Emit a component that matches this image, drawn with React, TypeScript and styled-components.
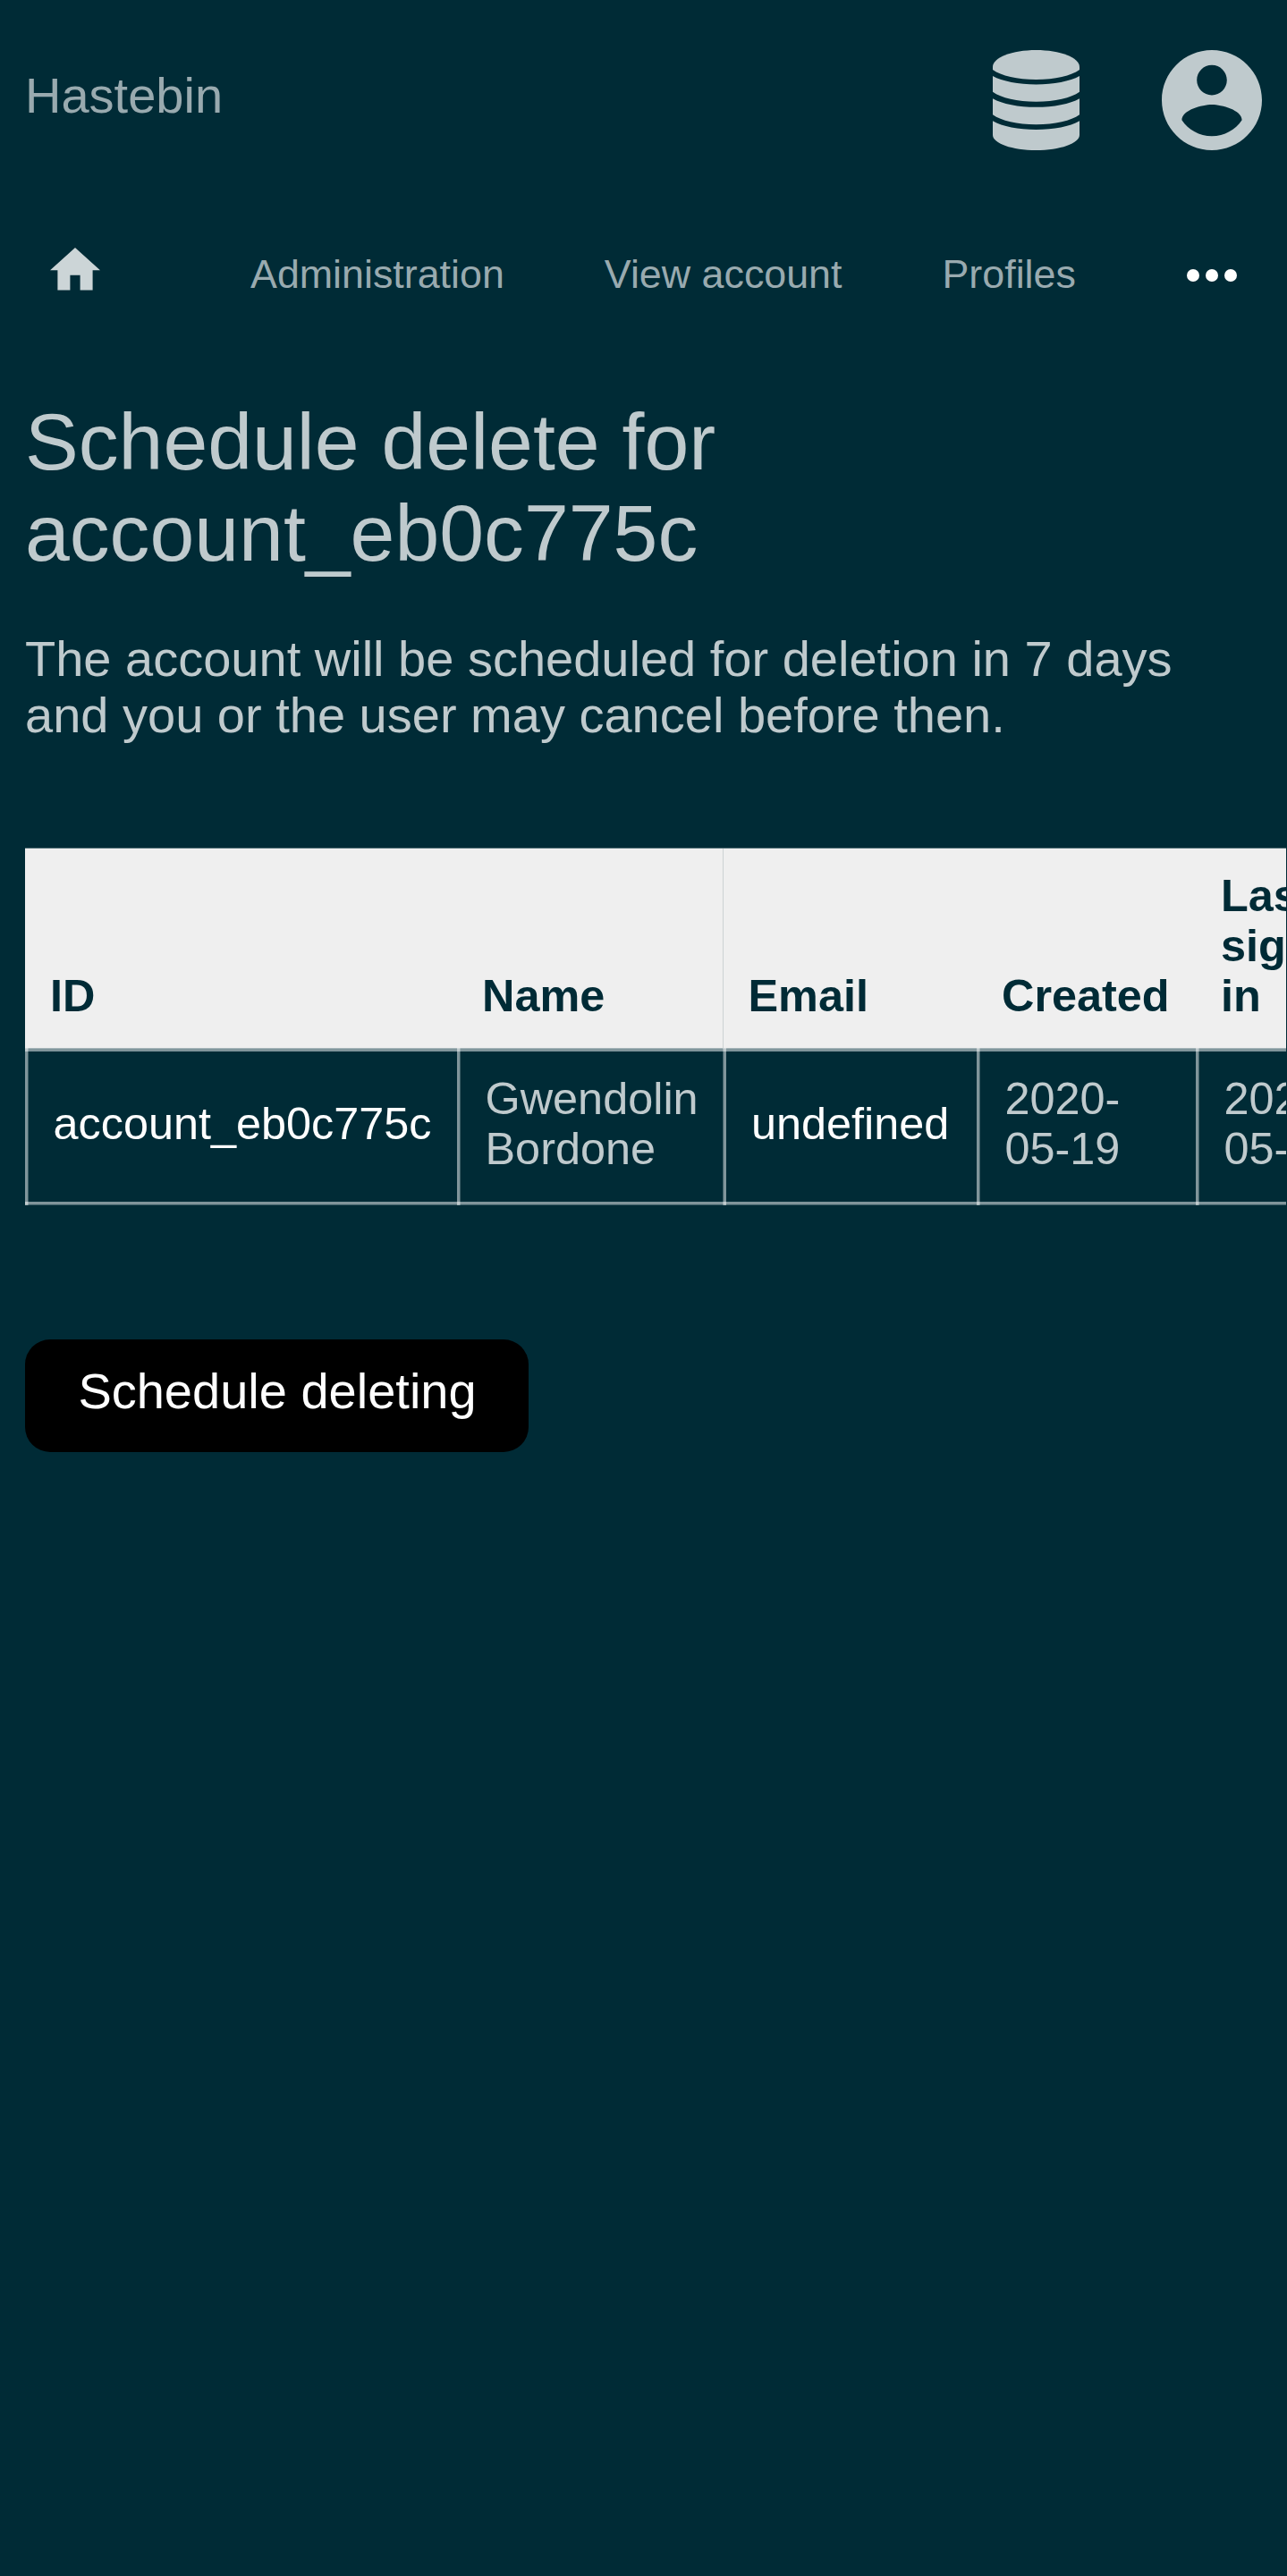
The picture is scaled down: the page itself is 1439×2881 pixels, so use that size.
import React from "react";
import styled, { createGlobalStyle, css } from "styled-components";

const Global = createGlobalStyle`
  html, body { margin: 0; background: #002b36; }
  body {
    font-family: "Liberation Sans", Arial, sans-serif;
    font-size: 56px;
    line-height: 63px;
    color: #bfcacd;
    overflow: hidden;
  }
`;

const Page = styled.div`
  width: 1438px;
  min-height: 2881px;
  overflow: hidden;
  background: #002b36;
`;

const Header = styled.header`
  display: flex;
  align-items: flex-start;
  justify-content: space-between;
  height: 224px;
  padding: 0 27.5px 0 28px;
  box-sizing: border-box;
`;

const Brand = styled.a`
  margin-top: 75px;
  color: #99aaaf;
`;

const Tools = styled.div`
  display: flex;
  gap: 91.5px;
  padding-top: 56px;

  svg { display: block; fill: #bfcacd; }
`;

const Nav = styled.nav`
  display: flex;
  align-items: flex-start;
  height: 219px;
  font-size: 44.8px;
  line-height: 52px;
  color: #99aaaf;
  white-space: nowrap;
`;

const HomeLink = styled.a`
  margin: 53px 0 0 56px;
  width: 224px;

  svg { display: block; fill: #ccd5d7; }
`;

const NavLink = styled.a`
  margin-top: 56px;
  margin-right: 112px;
`;

const More = styled.a`
  margin: 77px 55.5px 0 auto;

  svg { display: block; fill: #fff; }
`;

const Title = styled.h1`
  margin: 0 28px;
  width: 900px;
  font-size: 89.6px;
  font-weight: 400;
  line-height: 102px;
`;

const Intro = styled.p`
  margin: 58px 28px 0;
`;

const TableWrap = styled.div`
  margin: 117px 0 0 28px;
  overflow: hidden;
`;

const Table = styled.div`
  display: grid;
  grid-template-columns: 483px 297px 284px 245px 260px;
  width: max-content;
  font-size: 50.4px;
  line-height: 56px;
  border-top: 1px solid #4d6b72;
`;

const HeadCell = styled.div<{ $divided?: boolean }>`
  display: flex;
  align-items: flex-end;
  height: 223px;
  padding: 0 28px 30px ${(p) => (p.$divided ? "28.5px" : "28px")};
  box-sizing: border-box;
  background: #efefef;
  color: #002b36;
  font-weight: 700;
  ${(p) => p.$divided && css`box-shadow: inset 1px 0 #ccd2d3;`}
`;

const full = "rgba(255,255,255,.5)";
const half = "rgba(255,255,255,.25)";
const seam = "rgba(255,255,255,.65)";

const Cell = styled.div<{ $strong?: boolean; $late?: boolean }>`
  display: flex;
  align-items: center;
  height: 176px;
  padding: 0 28px 7px ${(p) => (p.$late ? "32px" : "31.5px")};
  box-sizing: border-box;
  color: ${(p) => (p.$strong ? "#fff" : "#bfcacd")};
  background:
    linear-gradient(${(p) => (p.$late ? "270deg" : "90deg")}, ${full} 3px, ${half} 3px) 0 0 / 4px 100% no-repeat,
    linear-gradient(${seam} 1px, ${full} 1px) 0 0 / 100% 4px no-repeat,
    linear-gradient(${full} 3px, ${half} 3px) 0 100% / 100% 4px no-repeat;
`;

const Button = styled.button`
  display: block;
  margin: 150px 0 0 28px;
  width: 563px;
  height: 126px;
  padding: 0 0 12px 1px;
  border: 0;
  border-radius: 28px;
  background: #000;
  color: #fff;
  font: inherit;
`;

const DatabaseIcon = () => (
  <svg width="97" height="112" viewBox="0 0 290 335" preserveAspectRatio="none">
    <path d="M0 56C0 25 65 0 145 0S290 25 290 56V66C262 86 208 99 145 99S28 86 0 66Z" />
    <path d="M0 87C32 105 86 115 145 115S258 105 290 87V140C262 160 208 173 145 173S28 160 0 140Z" />
    <path d="M0 162C32 180 86 191 145 191S258 180 290 162V216C262 236 208 249 145 249S28 236 0 216Z" />
    <path d="M0 237C32 256 86 266 145 266S258 256 290 237V284C290 312 225 335 145 335S0 312 0 284Z" />
  </svg>
);

const AccountIcon = () => (
  <svg width="112" height="112" viewBox="2 2 20 20">
    <path d="M12 2C6.48 2 2 6.48 2 12s4.48 10 10 10 10-4.48 10-10S17.52 2 12 2zm0 3c1.66 0 3 1.34 3 3s-1.34 3-3 3-3-1.34-3-3 1.34-3 3-3zm0 14.2c-2.5 0-4.71-1.28-6-3.22.03-1.99 4-3.08 6-3.08 1.99 0 5.97 1.09 6 3.08-1.29 1.94-3.5 3.22-6 3.22z" />
  </svg>
);

const links = ["Administration", "View account", "Profiles"];
const columns = [["ID"], ["Name"], ["Email"], ["Created"], ["Last", "sign", "in"]];
const row = [["account_eb0c775c"], ["Gwendolin", "Bordone"], ["undefined"], ["2020-", "05-19"], ["2020-", "05-19"]];

const Lines = ({ text }: { text: string[] }) => (
  <span>
    {text.map((t, i) => (
      <React.Fragment key={i}>
        {i > 0 && <br />}
        {t}
      </React.Fragment>
    ))}
  </span>
);

export default function App() {
  return (
    <Page>
      <Global />
      <Header>
        <Brand>Hastebin</Brand>
        <Tools>
          <DatabaseIcon />
          <AccountIcon />
        </Tools>
      </Header>
      <Nav>
        <HomeLink>
          <svg width="56" height="47.6" viewBox="2 3 20 17">
            <path d="M10 20v-6h4v6h5v-8h3L12 3 2 12h3v8z" />
          </svg>
        </HomeLink>
        {links.map((l) => (
          <NavLink key={l}>{l}</NavLink>
        ))}
        <More>
          <svg width="56" height="14" viewBox="0 0 16 4">
            <circle cx="2" cy="2" r="2" />
            <circle cx="8" cy="2" r="2" />
            <circle cx="14" cy="2" r="2" />
          </svg>
        </More>
      </Nav>
      <Title>Schedule delete for account_eb0c775c</Title>
      <Intro>The account will be scheduled for deletion in 7 days and you or the user may cancel before then.</Intro>
      <TableWrap>
        <Table>
          {columns.map((c, i) => (
            <HeadCell key={i} $divided={i === 2}>
              <Lines text={c} />
            </HeadCell>
          ))}
          {row.map((c, i) => (
            <Cell key={i} $strong={i === 0 || i === 2} $late={i === 2}>
              <Lines text={c} />
            </Cell>
          ))}
        </Table>
      </TableWrap>
      <Button>Schedule deleting</Button>
    </Page>
  );
}
